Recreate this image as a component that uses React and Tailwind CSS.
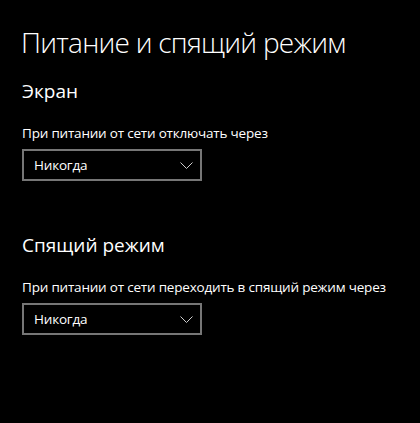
import { useState } from "react";

function Dropdown({ value }) {
  return (
    <button className="flex items-center justify-between w-[180px] h-[32px] border-2 border-[#767676] bg-black pl-[10px] pr-[7px] text-[13.5px] tracking-[-0.2px] text-white">
      <span>{value}</span>
      <svg width="13" height="7" viewBox="0 0 13 7" fill="none">
        <path d="M0.5 0.5 L6.5 6.5 L12.5 0.5" stroke="#cccccc" strokeWidth="1" />
      </svg>
    </button>
  );
}

export default function App() {
  const [screen] = useState("Никогда");
  const [sleep] = useState("Никогда");

  return (
    <div
      className="w-[420px] h-[423px] bg-black text-white pl-[22px] pt-[23px]"
      style={{ fontFamily: '"Open Sans", "Noto Sans", sans-serif' }}
    >
      <h1 className="text-[28px] font-light leading-[38px] tracking-[-0.75px] -ml-[1px]">
        Питание и спящий режим
      </h1>

      {/* Screen */}
      <h2 className="mt-[16px] text-[19px] leading-[28px]">Экран</h2>
      <p className="mt-[18px] text-[13.5px] tracking-[-0.2px] leading-[20px]">
        При питании от сети отключать через
      </p>
      <div className="mt-[6px]">
        <Dropdown value={screen} />
      </div>

      {/* Sleep */}
      <h2 className="mt-[50px] text-[19px] leading-[28px]">Спящий режим</h2>
      <p className="mt-[18px] text-[13.5px] tracking-[-0.2px] leading-[20px]">
        При питании от сети переходить в спящий режим через
      </p>
      <div className="mt-[6px]">
        <Dropdown value={sleep} />
      </div>
    </div>
  );
}
